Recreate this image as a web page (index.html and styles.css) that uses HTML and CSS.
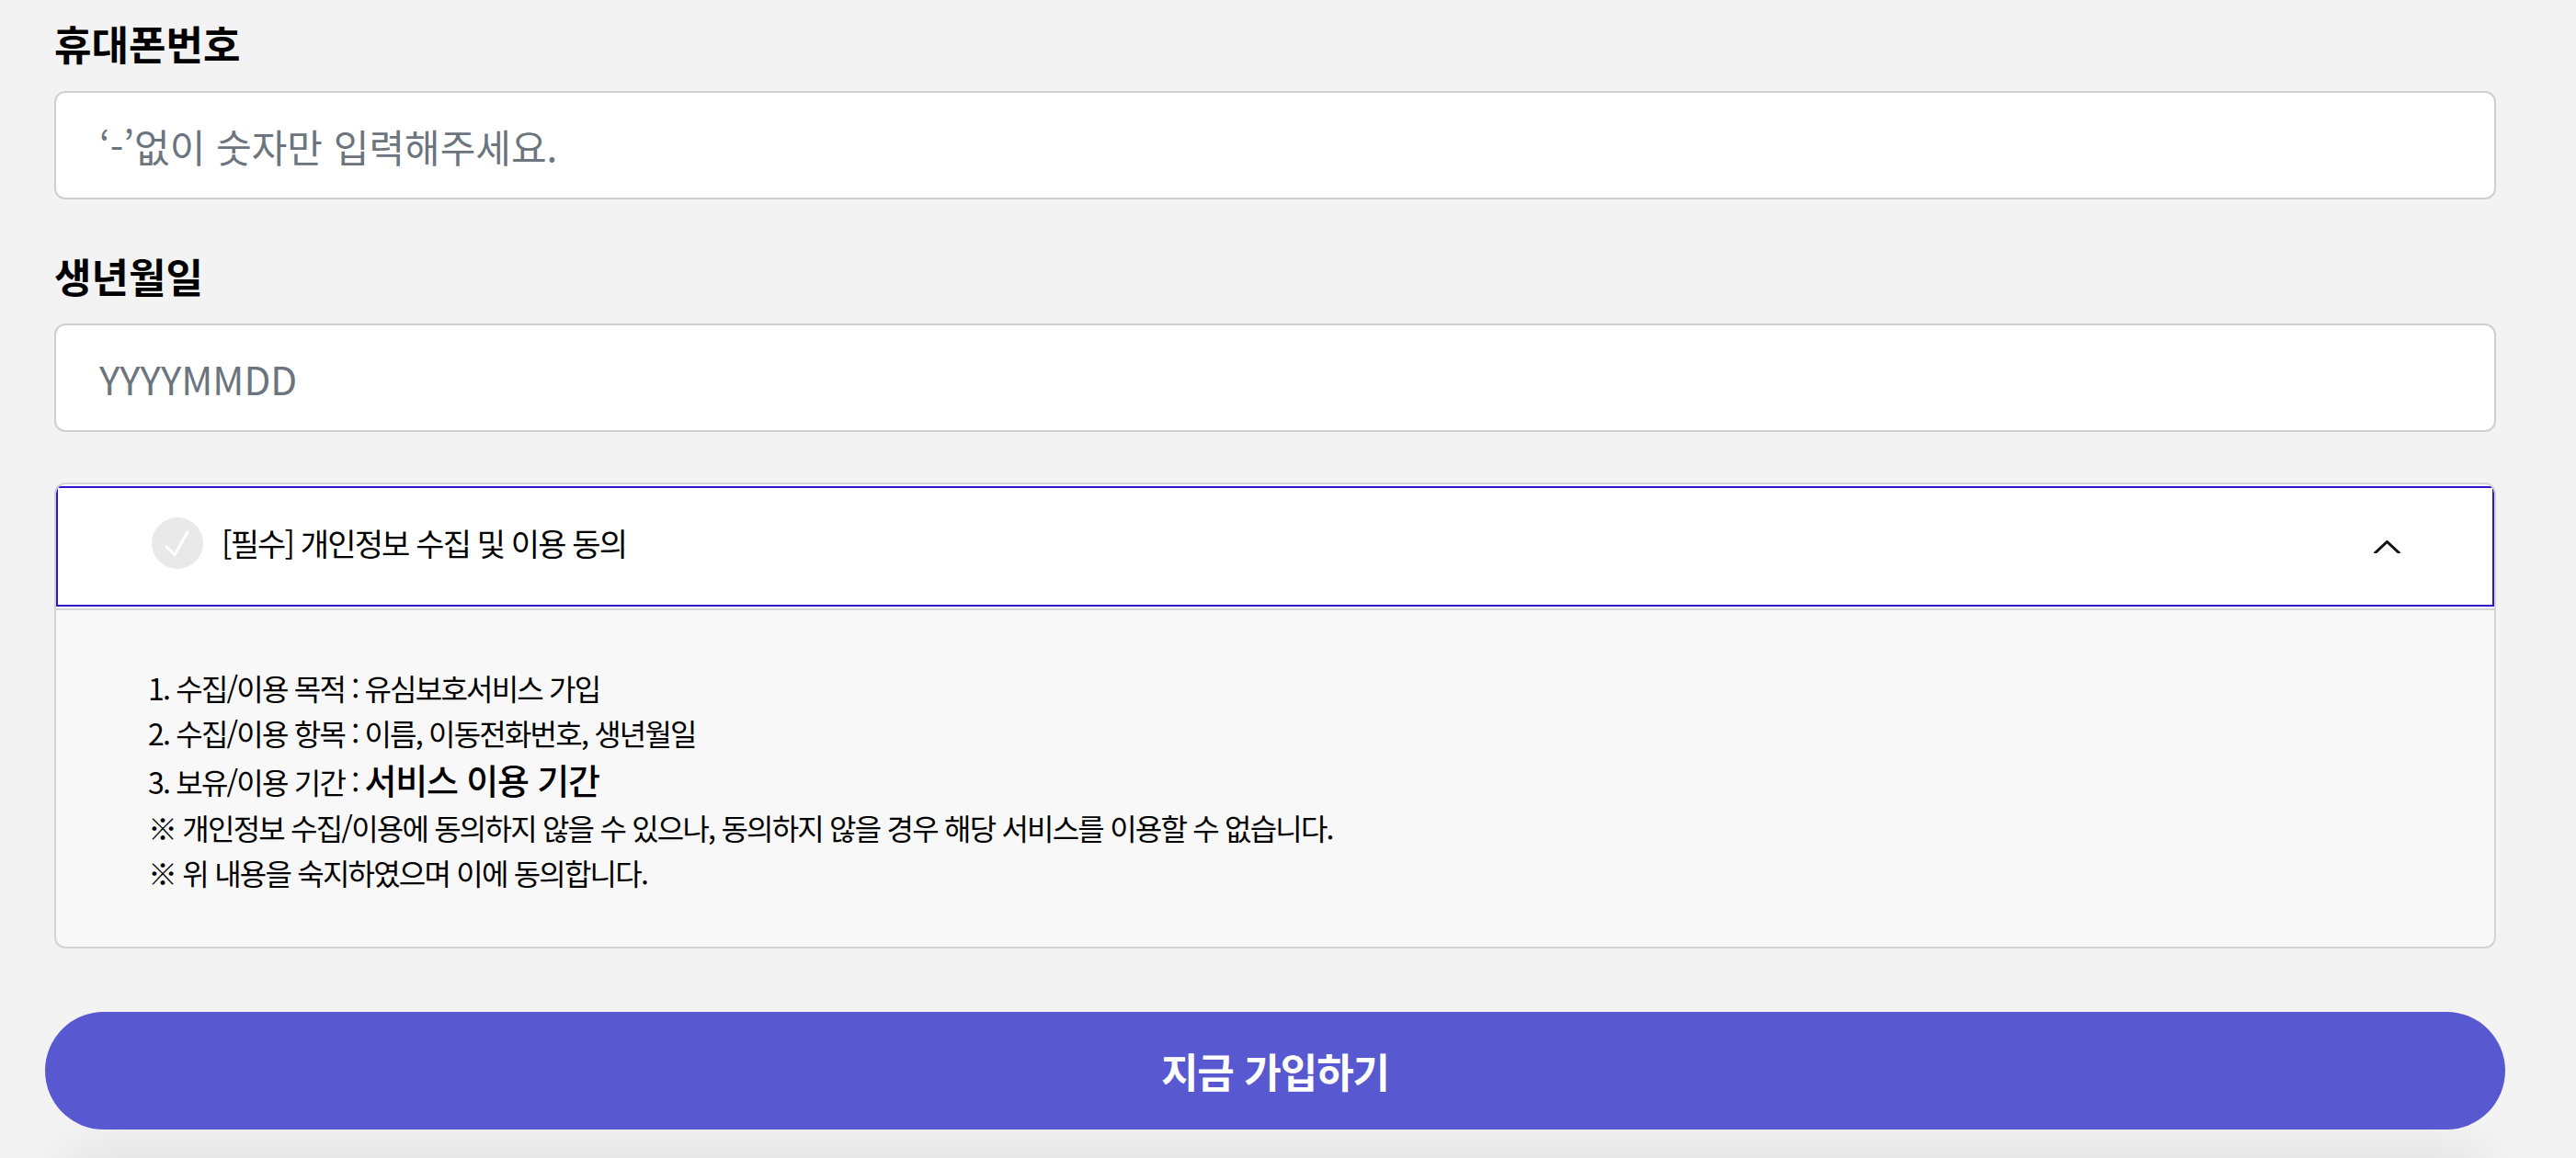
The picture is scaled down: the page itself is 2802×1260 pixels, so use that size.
FILE: index.html
```html
<!DOCTYPE html>
<html lang="ko">
<head>
<meta charset="utf-8">
<title>유심보호서비스 가입</title>
<link rel="stylesheet" href="styles.css">
</head>
<body>
<main class="page">
  <section class="field first">
    <label class="field-label" for="phone">휴대폰번호</label>
    <input class="field-input" id="phone" type="text" placeholder="‘-’없이 숫자만 입력해주세요.">
  </section>
  <section class="field">
    <label class="field-label" for="birth">생년월일</label>
    <input class="field-input" id="birth" type="text" placeholder="YYYYMMDD">
  </section>
  <section class="accordion">
    <div class="accordion-head">
      <span class="check">
        <svg viewBox="0 0 56 56" width="56" height="56"><path d="M16 32 L25 40.5 L39 16" fill="none" stroke="#fff" stroke-width="3" stroke-linecap="round" stroke-linejoin="round"/></svg>
      </span>
      <span class="accordion-title">[필수] 개인정보 수집 및 이용 동의</span>
      <svg class="chevron" viewBox="0 0 29 14" width="29" height="14"><path d="M0.5 14.5 L14.5 1.5 L28.5 14.5" fill="none" stroke="#111" stroke-width="3"/></svg>
    </div>
    <div class="accordion-body">
      <p class="line">1. 수집/이용 목적 : 유심보호서비스 가입</p>
      <p class="line">2. 수집/이용 항목 : 이름, 이동전화번호, 생년월일</p>
      <p class="line tall">3. 보유/이용 기간 : <strong class="strong">서비스 이용 기간</strong></p>
      <p class="line">※ 개인정보 수집/이용에 동의하지 않을 수 있으나, 동의하지 않을 경우 해당 서비스를 이용할 수 없습니다.</p>
      <p class="line">※ 위 내용을 숙지하였으며 이에 동의합니다.</p>
    </div>
  </section>
  <button class="submit" type="button">지금 가입하기</button>
</main>
</body>
</html>
```
FILE: styles.css
```css
* { box-sizing: border-box; }
html, body { margin: 0; height: 1260px; overflow: hidden; }
body { background: #f3f3f3; font-family: "Noto Sans CJK KR", "Noto Sans", sans-serif; color: #000; }
.page { width: 2656px; margin-left: 59px; padding-top: 14px; }
.field { margin-bottom: 50px; }
.field + .field { margin-bottom: 55px; }
.field-label { display: block; height: 66px; margin-bottom: 19px; font-size: 44px; line-height: 66px; font-weight: 700; }
.field-input { display: block; width: 100%; height: 118px; padding: 0 47px; border: 2px solid #cfcfcf; border-radius: 12px; background: #fff; font: 400 42px/1.5 "Noto Sans CJK KR", sans-serif; outline: none; }
.field-input::placeholder { color: #6c757d; opacity: 1; }
.accordion { height: 507px; border: 2px solid #d4d4d4; border-radius: 12px; background: #f8f8f8; overflow: hidden; }
.accordion-head { display: flex; align-items: center; height: 131px; margin-top: 2px; padding: 0 100px 0 102px; border: 2px solid #3014d0; background: #fff; }
.check { display: flex; width: 56px; height: 56px; margin-bottom: 7px; border-radius: 50%; background: #e9e9e9; flex: none; }
.accordion-title { flex: 1; margin: 0 0 7px 20px; font-size: 34px; line-height: 48px; letter-spacing: -1.85px; }
.chevron { flex: none; }
.accordion-body { margin-top: 2px; padding: 60px 100px 0; border-top: 2px solid #d4d4d4; background: #f8f8f8; }
.line { margin: 0; font-size: 32px; line-height: 49px; letter-spacing: -1.8px; }
.line.tall { line-height: 52px; }
.strong { font-size: 38px; font-weight: 500; letter-spacing: -1.2px; }
.submit { display: block; width: 2676px; height: 128px; margin: 69px 0 0 -10px; border: 0; border-radius: 64px; background: #5858d0; color: #fff; font: 700 44px/1 "Noto Sans CJK KR", sans-serif; letter-spacing: -1px; box-shadow: 0 130px 50px -10px rgba(0,0,0,.06); }
```
